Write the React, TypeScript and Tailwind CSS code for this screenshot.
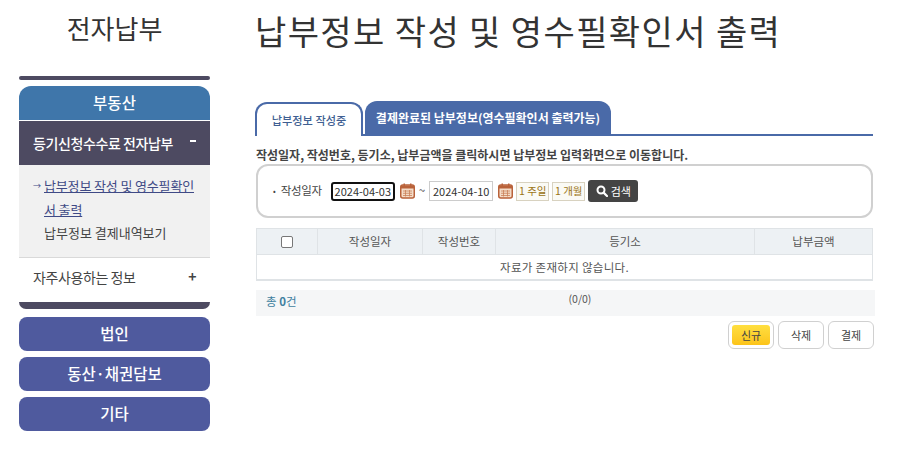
import React from 'react';

const font = { fontFamily: '"Noto Sans CJK KR", "Noto Sans", sans-serif' };

const CalendarIcon = () => (
  <svg width="15" height="16" viewBox="0 0 15 16" className="shrink-0">
    <rect x="0.75" y="2" width="13.5" height="13" rx="2" fill="#f4dcc8" stroke="#b9623a" strokeWidth="1.5" />
    <rect x="1" y="2.5" width="13" height="3" fill="#b9623a" />
    <rect x="3.5" y="0.5" width="1.5" height="3.5" fill="#b9623a" />
    <rect x="10" y="0.5" width="1.5" height="3.5" fill="#b9623a" />
    <path d="M3 8h9M3 10.25h9M3 12.5h9M5.5 7v6.5M9.5 7v6.5" stroke="#c98058" strokeWidth="0.8" />
  </svg>
);

const SearchIcon = () => (
  <svg width="12" height="12" viewBox="0 0 12 12" className="shrink-0">
    <circle cx="5" cy="5" r="3.5" fill="none" stroke="#fff" strokeWidth="2" />
    <path d="M7.6 7.6 11 11" stroke="#fff" strokeWidth="2.2" strokeLinecap="round" />
  </svg>
);

function Sidebar() {
  return (
    <aside className="w-[191px] shrink-0">
      <h1 className="h-[76px] pt-[9px] text-center text-[26px] leading-[38px] font-normal text-[#333]">전자납부</h1>
      <div className="h-[4px] rounded-full bg-[#4d4a61]"></div>

      <div className="mt-[6px] flex h-[34px] items-center justify-center rounded-t-xl bg-[#3f76aa] text-[15.5px] font-medium text-white">부동산</div>
      <div className="mt-px flex h-[44px] items-center justify-between bg-[#4d4a61] pl-[14px] pr-[14px] text-[14px] font-medium tracking-[-0.4px] text-white">
        <span>등기신청수수료 전자납부</span>
        <span className="mb-[4px] h-[2px] w-[6px] bg-white"></span>
      </div>

      <div className="h-[93px] border-b border-[#d9d9d9] bg-[#f1f1f1] pl-[13px] pr-[12px] pt-[9px] text-[13px] leading-[24px] text-[#444]">
        <div className="relative break-all pl-[12px] tracking-[-0.15px] text-[#3f4a86] underline">
          <span className="absolute left-[1px] top-0 text-[8px] no-underline">→</span>
          납부정보 작성 및 영수필확인서 출력
        </div>
        <div className="-mt-[1px] pl-[12px]">납부정보 결제내역보기</div>
      </div>

      <div className="flex h-[44px] items-center justify-between pb-[5px] pl-[14px] pr-[14px] text-[14px] tracking-[-0.4px] text-[#444]">
        <span>자주사용하는 정보</span>
        <span className="mb-[4px] text-[14px] font-bold leading-none">+</span>
      </div>
      <div className="h-[7px] rounded-b-xl bg-[#4d4a61]"></div>

      <div className="mt-[8px] flex flex-col gap-[6px]">
        {['법인', '동산·채권담보', '기타'].map((label) => (
          <div key={label} className="flex h-[34px] items-center justify-center rounded-lg bg-[#4f5a9e] text-[15.5px] font-medium text-white">
            {label}
          </div>
        ))}
      </div>
    </aside>
  );
}

function SearchBox() {
  return (
    <div className="mt-[1px] ml-px flex h-[54px] items-center rounded-xl border-2 border-[#d0d0d0] pl-[15px] text-[11.5px] text-[#444]">
      <span className="mr-[5px] text-[8px]">•</span>
      <span className="mr-[9px] tracking-[-0.3px]">작성일자</span>
      <div className="flex h-[19px] w-[64px] items-center justify-center rounded-[3px] border-2 border-[#111] text-[11px] text-[#333]">2024-04-03</div>
      <span className="ml-[5px]"><CalendarIcon /></span>
      <span className="mx-[4px] text-[#555]">~</span>
      <div className="flex h-[20px] w-[64px] items-center justify-center border border-[#ccc] text-[11px] text-[#333]">2024-04-10</div>
      <span className="ml-[5px]"><CalendarIcon /></span>
      <div className="ml-[3px] flex h-[19px] w-[33px] items-center justify-center border border-[#d8d2c0] bg-[#fafaf5] text-[10.5px] text-[#9a7414]">1 주일</div>
      <div className="ml-[3px] flex h-[19px] w-[33px] items-center justify-center border border-[#d8d2c0] bg-[#fafaf5] text-[10.5px] text-[#9a7414]">1 개월</div>
      <div className="ml-[3px] flex h-[22px] w-[50px] items-center justify-center gap-[3px] rounded-[3px] bg-[#444] text-[11px] text-white">
        <SearchIcon />
        <span>검색</span>
      </div>
    </div>
  );
}

function ResultTable() {
  return (
    <div className="mt-[10px] ml-px border-b-2 border-x border-[#dfe3e6] text-[11.5px] text-[#555]">
      <div className="grid h-[27px] grid-cols-[61px_105px_73px_259px_1fr] items-stretch border-y border-[#dfe3e6] bg-[#edf1f4] text-center">
        <div className="flex items-center justify-center border-r border-[#dfe3e6]">
          <span className="h-[12px] w-[12px] rounded-[2px] border border-[#777] bg-white"></span>
        </div>
        <div className="flex items-center justify-center border-r border-[#dfe3e6]">작성일자</div>
        <div className="flex items-center justify-center border-r border-[#dfe3e6]">작성번호</div>
        <div className="flex items-center justify-center border-r border-[#dfe3e6]">등기소</div>
        <div className="flex items-center justify-center">납부금액</div>
      </div>
      <div className="flex h-[24px] items-center justify-center pt-px tracking-[0.3px]">자료가 존재하지 않습니다.</div>
    </div>
  );
}

function Main() {
  return (
    <main className="ml-[45px] w-[618px]">
      <h2 className="h-[102px] pt-[7px] text-[34px] leading-[48px] font-normal tracking-[1.4px] text-[#333] whitespace-nowrap">납부정보 작성 및 영수필확인서 출력</h2>

      <div className="flex h-[34px] items-end gap-[2px] border-b-2 border-[#4a6aa8]">
        <div className="relative -mb-[2px] flex h-[34px] w-[108px] items-center justify-center rounded-t-xl border-x-2 border-t-2 border-[#4a6aa8] bg-white text-[11.2px] font-medium text-[#3f5f92]">납부정보 작성중</div>
        <div className="flex h-[33px] w-[246px] items-center justify-center rounded-t-xl bg-[#4a6aa8] text-[12px] font-bold text-white">결제완료된 납부정보(영수필확인서 출력가능)</div>
      </div>

      <p className="mt-[10px] ml-px text-[12px] leading-[17px] font-bold text-[#444] whitespace-nowrap">작성일자, 작성번호, 등기소, 납부금액을 클릭하시면 납부정보 입력화면으로 이동합니다.</p>

      <SearchBox />
      <ResultTable />

      <div className="mt-[9px] ml-px -mr-[2px] flex h-[26px] items-start bg-[#f5f6f7] pl-[10px] pt-[3px] text-[11.5px]">
        <span className="text-[#3f7fa0]">총 <b>0</b>건</span>
        <span className="-mt-[2px] ml-[272px] text-[10.5px] text-[#555]">(0/0)</span>
      </div>

      <div className="mt-[5px] mr-[-1px] flex justify-end gap-[4px] text-[11px] text-[#444]">
        <div className="flex h-[28px] w-[46px] items-center justify-center rounded-md border border-[#d0d0d0] bg-white p-[3px]">
          <span className="flex h-full w-full items-center justify-center rounded-[3px] bg-gradient-to-b from-[#ffdf3f] to-[#fcc419]">신규</span>
        </div>
        <div className="flex h-[28px] w-[46px] items-center justify-center rounded-md border border-[#d0d0d0] bg-white">삭제</div>
        <div className="flex h-[28px] w-[46px] items-center justify-center rounded-md border border-[#d0d0d0] bg-white">결제</div>
      </div>
    </main>
  );
}

export default function App() {
  return (
    <div className="min-h-[470px] bg-white pl-[19px]" style={font}>
      <div className="flex">
        <Sidebar />
        <Main />
      </div>
    </div>
  );
}
